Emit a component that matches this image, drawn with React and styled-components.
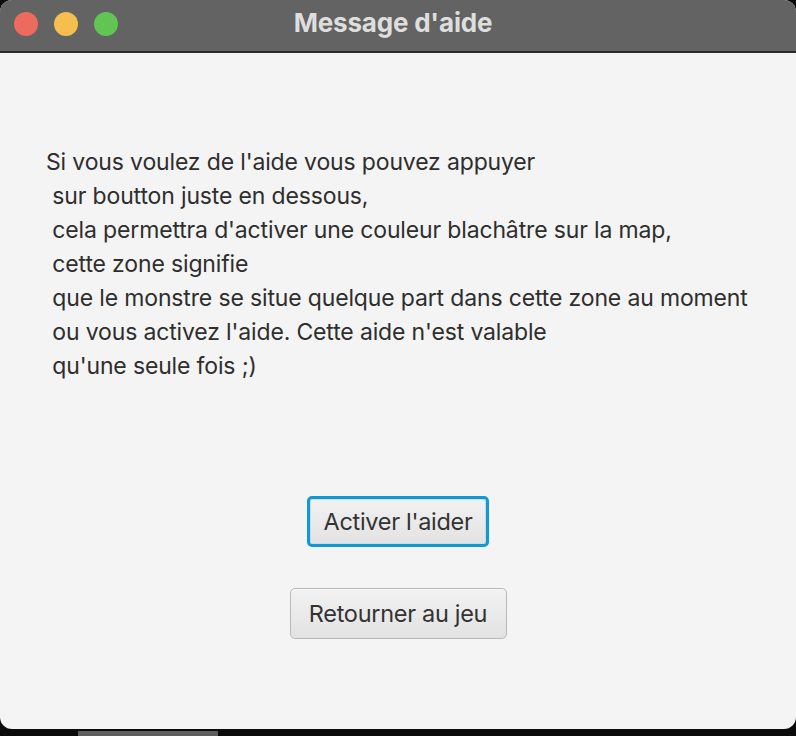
import styled, { createGlobalStyle } from "styled-components";

const GlobalStyle = createGlobalStyle`
  html, body {
    margin: 0;
    padding: 0;
    background: #0b0b0b;
    font-family: Inter, "Noto Sans", sans-serif;
  }
`;

const Screen = styled.div`
  width: 796px;
  height: 736px;
  display: flex;
  flex-direction: column;
  overflow: hidden;
`;

const Window = styled.div`
  height: 731px;
  display: flex;
  flex-direction: column;
  border-radius: 12px;
  overflow: hidden;
  background: #f4f4f4;
`;

const TitleBar = styled.div`
  height: 51px;
  flex: none;
  display: flex;
  align-items: center;
  position: relative;
  background: #636363;
  border-bottom: 2px solid #2b2b2b;
  box-sizing: content-box;
`;

const Lights = styled.div`
  display: flex;
  gap: 16px;
  padding-left: 14px;
  margin-top: -3px;
`;

const Light = styled.span`
  width: 24px;
  height: 24px;
  border-radius: 50%;
  background: ${(p) => p.$color};
`;

const Title = styled.div`
  position: absolute;
  inset: 0;
  display: flex;
  align-items: center;
  justify-content: center;
  margin-top: -6px;
  padding-right: 10px;
  font-size: 26px;
  font-weight: 700;
  letter-spacing: -0.2px;
  color: #dedede;
  pointer-events: none;
`;

const Body = styled.div`
  flex: 1;
  display: flex;
  flex-direction: column;
  padding: 92px 0 0 46px;
`;

const Message = styled.div`
  font-size: 23px;
  line-height: 34px;
  color: #2e2e2e;
  white-space: pre;
  letter-spacing: -0.15px;
`;

const Actions = styled.div`
  display: flex;
  flex-direction: column;
  align-items: center;
  gap: 41px;
  margin-top: 113px;
  margin-left: -46px;
`;

const Button = styled.button`
  height: 51px;
  width: ${(p) => p.$width}px;
  box-sizing: border-box;
  font-family: inherit;
  font-size: 23.5px;
  color: #333;
  letter-spacing: -0.3px;
  border-radius: 5px;
  background: linear-gradient(#f2f2f2, #e2e2e2);
  border: ${(p) => (p.$focused ? "3px solid #0f9ad6" : "1px solid #b8b8b8")};
  box-shadow: ${(p) =>
    p.$focused ? "inset 0 0 0 1px #c9dce6" : "inset 0 1px 0 #fafafa"};
  padding: 0;
  cursor: default;
`;

const Dock = styled.div`
  height: 5px;
  display: flex;
  padding-top: 2px;
  padding-left: 78px;
`;

const DockBar = styled.div`
  width: 140px;
  background: #5e5e5e;
`;

const lines = [
  "Si vous voulez de l'aide vous pouvez appuyer",
  " sur boutton juste en dessous,",
  " cela permettra d'activer une couleur blachâtre sur la map,",
  " cette zone signifie",
  " que le monstre se situe quelque part dans cette zone au moment",
  " ou vous activez l'aide. Cette aide n'est valable",
  " qu'une seule fois ;)",
];

export default function App() {
  return (
    <Screen>
      <GlobalStyle />
      <Window>
        <TitleBar>
          <Lights>
            <Light $color="#ed6a5e" />
            <Light $color="#f5bf4f" />
            <Light $color="#61c554" />
          </Lights>
          <Title>Message d'aide</Title>
        </TitleBar>
        <Body>
          <Message>{lines.join("\n")}</Message>
          <Actions>
            <Button $width={182} $focused>
              Activer l'aider
            </Button>
            <Button $width={217}>Retourner au jeu</Button>
          </Actions>
        </Body>
      </Window>
      <Dock>
        <DockBar />
      </Dock>
    </Screen>
  );
}
